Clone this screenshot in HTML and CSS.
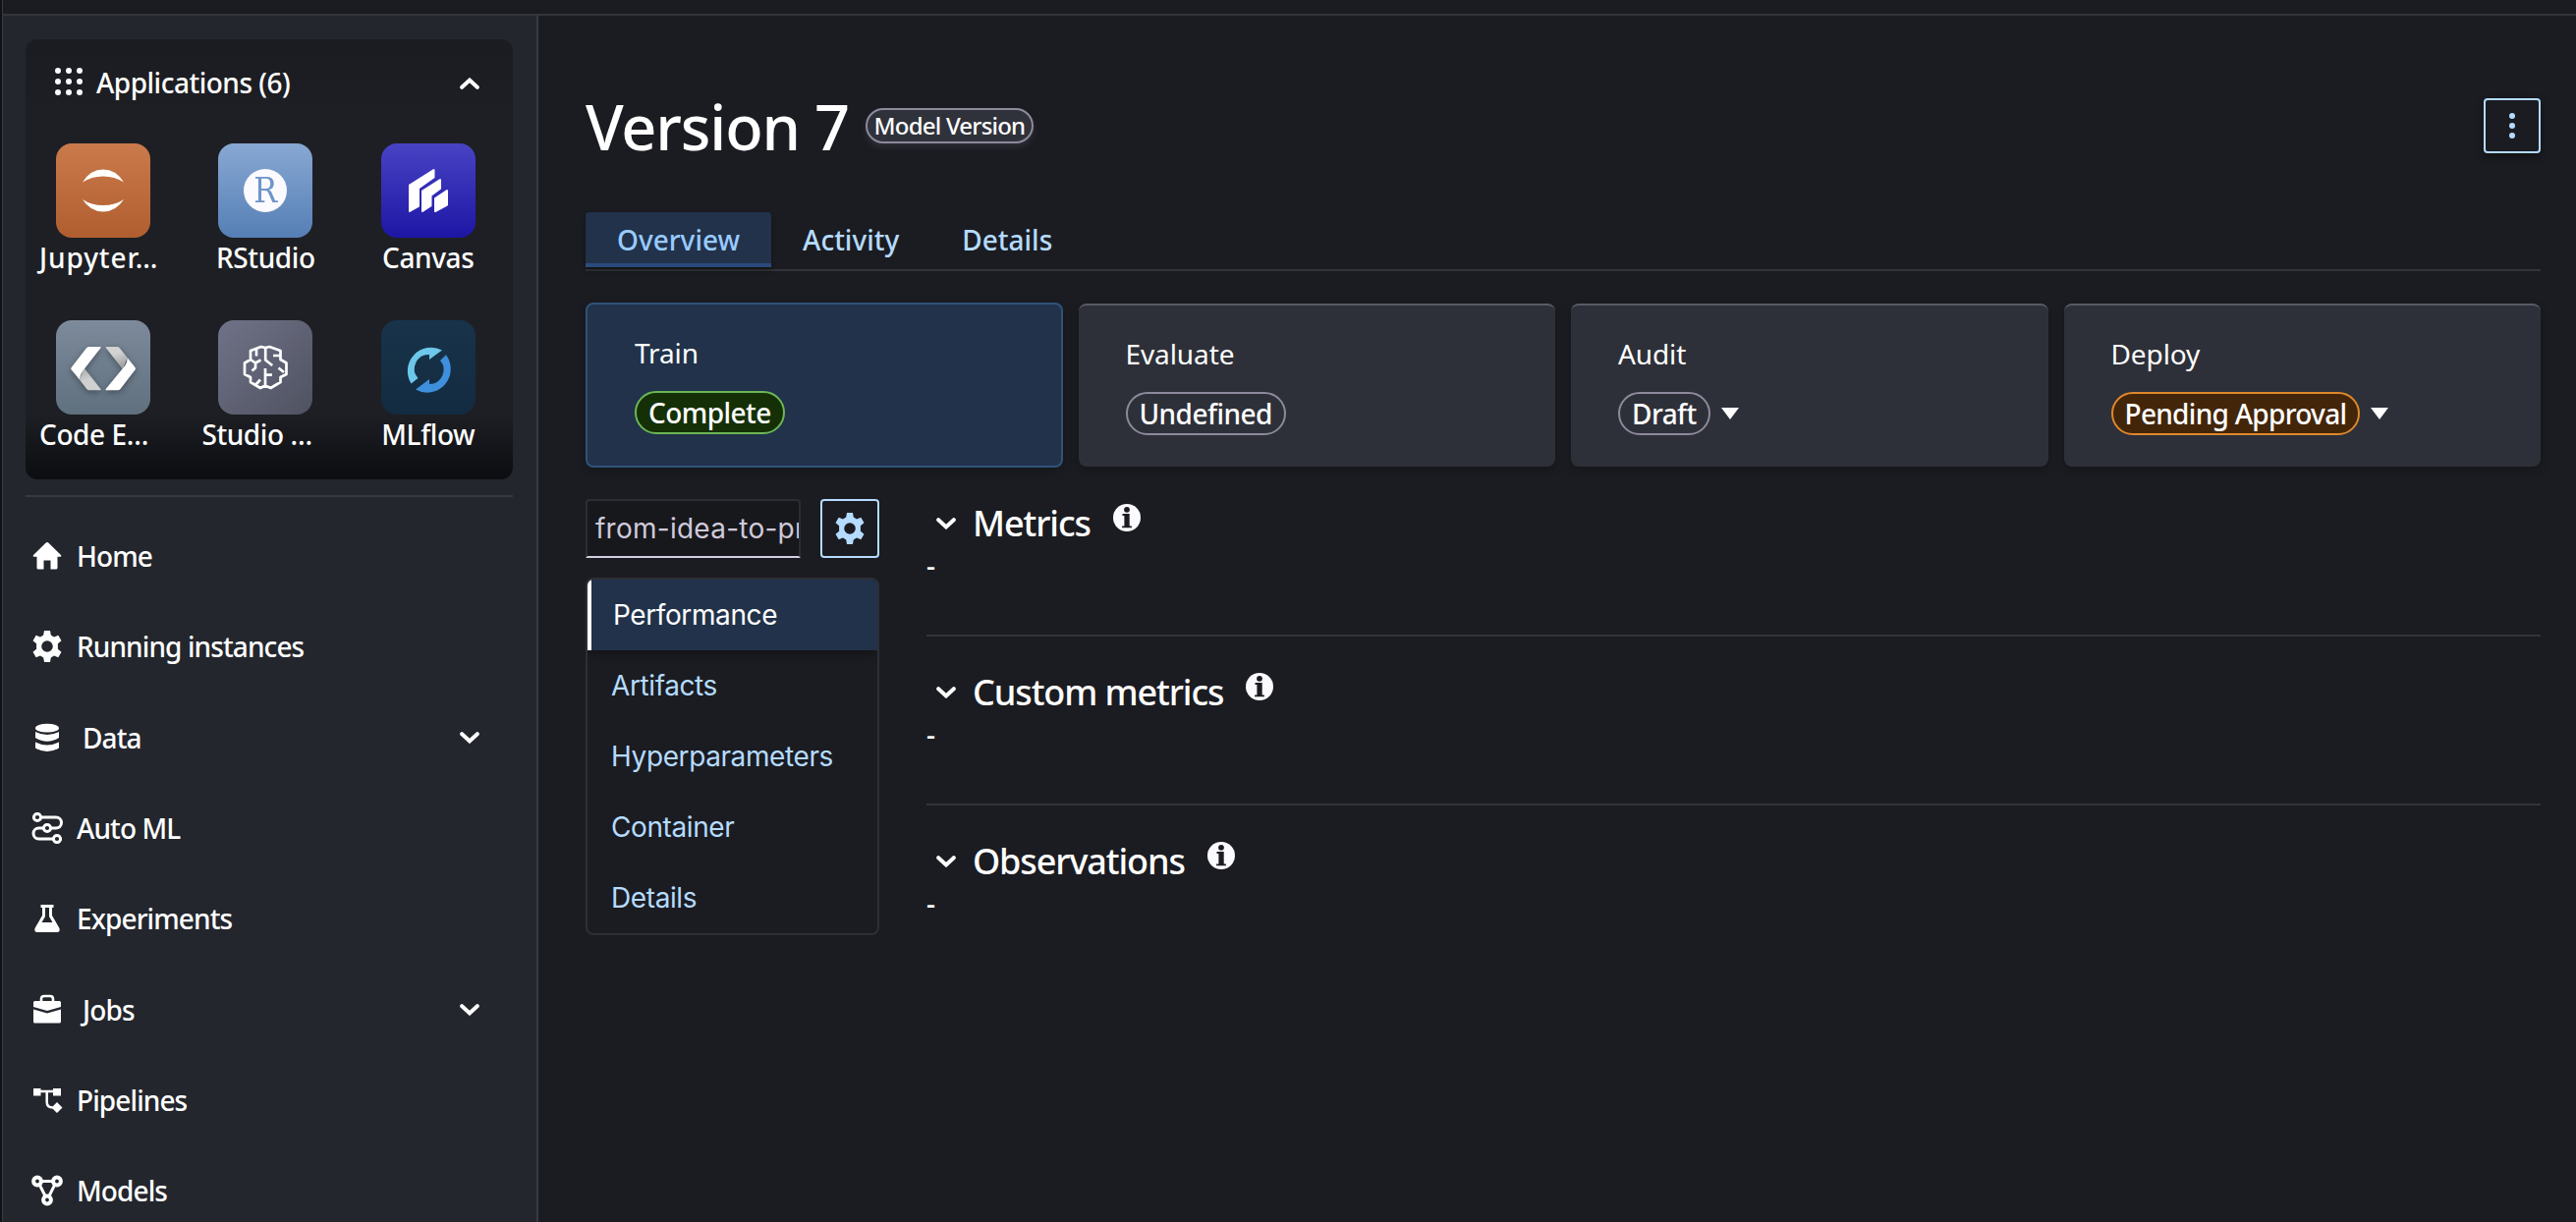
FILE: index.html
```html
<!DOCTYPE html>
<html lang="en">
<head>
<meta charset="utf-8">
<title>Version 7</title>
<link rel="stylesheet" href="styles.css">
</head>
<body>
<svg width="0" height="0" class="defs">
  <defs>
    <symbol id="chev" viewBox="0 0 20 12"><path d="M2.2 2.2 10 9.4l7.800-7.200" fill="none" stroke="currentColor" stroke-width="4" stroke-linecap="round" stroke-linejoin="miter"/></symbol>
    <symbol id="gear" viewBox="0 0 30 32"><path fill="currentColor" fill-rule="evenodd" d="M12 0h6l.8 4.600 3.200 1.800 4.300-1.600 3.200 5.400-3.600 3v5.600l3.600 3-3.200 5.400-4.300-1.600-3.200 1.800L18 32h-6l-.8-4.600L8 25.600l-4.300 1.600L.5 21.800l3.600-3v-5.600l-3.600-3 3.200-5.400L8 6.400l3.200-1.800zM15 10.200a5.800 5.800 0 1 0 0 11.600 5.800 5.800 0 0 0 0-11.600z"/></symbol>
    <symbol id="info" viewBox="0 0 28 28"><circle cx="14" cy="14" r="14" fill="#fbfaff"/><g fill="#1b1c21"><circle cx="14" cy="5.800" r="2.900"/><path d="M9.500 10h7.200v12.400h2.200v1.900H9.100v-1.900h2.300V11.900H9.500z"/></g></symbol>
  </defs>
</svg>
<div class="app">
  <div class="topbar"></div>
  <div class="body">
    <aside class="sidebar">
      <section class="apps">
        <header class="apps-head">
          <svg class="grid-icon" viewBox="0 0 28 28" fill="#fbfaff"><circle cx="3" cy="3" r="3"/><circle cx="14" cy="3" r="3"/><circle cx="25" cy="3" r="3"/><circle cx="3" cy="14" r="3"/><circle cx="14" cy="14" r="3"/><circle cx="25" cy="14" r="3"/><circle cx="3" cy="25" r="3"/><circle cx="14" cy="25" r="3"/><circle cx="25" cy="25" r="3"/></svg>
          <span class="apps-title">Applications (6)</span>
          <svg class="chev up"><use href="#chev"/></svg>
        </header>
        <div class="apps-grid">
          <div class="tile-cell"><div class="tile jupyter"><svg viewBox="0 0 96 96" fill="#fff"><path d="M27 39.500Q35 26.500 48 26.500T69 39.500Q60 33.500 48 33.500T27 39.500zM27 57q8 12.500 21 12.500T69 57q-9 6-21 6t-21-6z"/></svg></div><span class="left wide">Jupyter…</span></div>
          <div class="tile-cell"><div class="tile rstudio"><span class="r-mark"><b>R</b></span></div><span>RStudio</span></div>
          <div class="tile-cell"><div class="tile canvas"><svg viewBox="0 0 96 96" fill="#fff" stroke="#fff" stroke-width="2" stroke-linejoin="round"><path d="M29 42.500 53.500 27v7.500L38 45.500v18.500l-9 5zM42 48.500 60 37v9L50.500 53v10.500L42 69zM55 56l12-8v14.500L55 69z"/></svg></div><span>Canvas</span></div>
          <div class="tile-cell"><div class="tile code"><svg viewBox="0 0 96 96"><defs><linearGradient id="fold" x1="0" y1="0" x2="0.300" y2="1"><stop offset="0.400" stop-color="#d2d2d2"/><stop offset="1" stop-color="#a2a2a2"/></linearGradient><linearGradient id="fold2" x1="0.300" y1="1" x2="0" y2="0"><stop offset="0.400" stop-color="#d0d0d0"/><stop offset="1" stop-color="#a4a4a4"/></linearGradient></defs><path d="M50.700 28q-.5-1 .5-1H62q1.800 0 2.800 1.300L72.500 38 68 50z" fill="url(#fold)"/><path d="M24 60.500 28.500 48.500 45.500 70q.5 1.300-.5 1.300H34q-1.800 0-2.800-1.300z" fill="url(#fold2)"/><path d="M31 28.300Q32 27 34 27h11q1 0 .6 1L28.500 50Q25 54 24 60.500L15.700 50.500q-.9-1.200 0-2.400zM72.500 38l8 10q.9 1.300 0 2.500L65.500 70q-1 1.300-2.800 1.300H51.200q-1 0-.5-1.300L68 49Q73 44 72.500 38z" fill="#fff"/></svg></div><span class="left">Code E…</span></div>
          <div class="tile-cell"><div class="tile brain"><svg viewBox="0 0 96 96" fill="none" stroke="#fff" stroke-width="2.700" stroke-linejoin="round"><path d="M48 28l-4.300-1L33 31v9l-6 3.500V55l6 3v5l10 6 5-2.500V49M48 28l4.300-1L63.500 31v9l6 3.500V55l-6 3v5l-10 6-5.500-2.500M39 29v7.500M33 40l5 3.500 5.500-3M38 43.500v5l-3.500 3M48.200 28v12.500l7 5.500M63.500 36H56M61.500 48.500l5.500 4.500M48 55.700h7M43 60.500l-4.500 5"/></svg></div><span class="left">Studio …</span></div>
          <div class="tile-cell"><div class="tile mlflow"><svg viewBox="0 0 96 96"><path d="M30.500 64.500A24 24 0 0 1 62 30.500L49 40v-5.100A14.500 14.500 0 0 0 37.500 59z" fill="#6cc7ea"/><path d="M66 35.200A24 24 0 0 1 35 70.500L49 60v5A14.500 14.500 0 0 0 60 41z" fill="#3e8fdc"/></svg></div><span>MLflow</span></div>
        </div>
      </section>
      <hr class="side-line">
      <nav class="nav">
        <a class="nav-item"><svg class="ico" viewBox="0 0 32 32" fill="#fff"><path d="M16 2q.8 0 1.500.7L30 15q1.200 1.500-.5 1.700H26.500V28q0 1.500-1.500 1.500h-5.500v-9h-7v9H7Q5.500 29.500 5.500 28V16.700H2.500Q.8 16.500 2 15L14.500 2.700Q15.200 2 16 2z"/></svg><span>Home</span></a>
        <a class="nav-item"><svg class="ico"><use href="#gear"/></svg><span>Running instances</span></a>
        <a class="nav-item group"><svg class="ico" viewBox="0 0 32 32" fill="#fff"><ellipse cx="16" cy="6.200" rx="12" ry="4.400"/><path d="M4 10q12 6 24 0v6q-12 7.500-24 0zM4 20.500q12 6 24 0v6q-12 7-24 0z"/></svg><span>Data</span><svg class="chev"><use href="#chev"/></svg></a>
        <a class="nav-item"><svg class="ico" viewBox="0 0 32 32" fill="none" stroke="#fff" stroke-width="3"><circle cx="6" cy="5" r="3.600"/><circle cx="16" cy="16" r="3.600"/><circle cx="26" cy="27" r="3.600"/><path d="M9.600 5H25a5.500 5.500 0 0 1 0 11h-5.400M12.400 16H7.500a5.500 5.500 0 0 0 0 11h14.900"/></svg><span>Auto ML</span></a>
        <a class="nav-item"><svg class="ico" viewBox="0 0 32 32" fill="#fff"><path fill-rule="evenodd" d="M9.500 2h13v3H21v8l7.500 13q1 4-2.500 4H6q-3.500 0-2.500-4L11 13V5H9.500zM14 5v9l-3.500 6h11L18 14V5z"/></svg><span>Experiments</span></a>
        <a class="nav-item group"><svg class="ico" viewBox="0 0 32 32" fill="#fff"><path d="M10 8V5q0-3 3-3h6q3 0 3 3v3" fill="none" stroke="#fff" stroke-width="2.600"/><path d="M3.500 7h25q1.500 0 1.500 1.500V13l-14 4-14-4V8.500Q2 7 3.500 7zM2 15.500l14 4 14-4V28q0 1.500-1.500 1.500h-25Q2 29.500 2 28z"/></svg><span>Jobs</span><svg class="chev"><use href="#chev"/></svg></a>
        <a class="nav-item"><svg class="ico" viewBox="0 0 32 32" fill="#fff"><path d="M3 4h6.500v7.500H2V4zM22 4h8v7.500h-8zM26 18l5.500 5.500L26 29l-5.500-5.500z"/><path d="M9 7h13M15.700 7v11q0 5.500 6 5.500" fill="none" stroke="#fff" stroke-width="2.500"/></svg><span>Pipelines</span></a>
        <a class="nav-item"><svg class="ico" viewBox="0 0 32 32" fill="none" stroke="#fff"><g stroke-width="4"><circle cx="6" cy="6.500" r="3.900"/><circle cx="26" cy="6.500" r="3.900"/><circle cx="16" cy="25.500" r="3.900"/></g><path d="M9 6.500h14M8.500 10.500l5.500 11M23.500 10.500 18 21.500" stroke-width="3"/></svg><span>Models</span></a>
      </nav>
    </aside>
    <main class="main">
      <header class="page-head">
        <h1>Version 7</h1>
        <span class="type-badge">Model Version</span>
        <button class="more"><svg viewBox="0 0 6 26" fill="#b5dbff"><circle cx="3" cy="3" r="3"/><circle cx="3" cy="13" r="3"/><circle cx="3" cy="23" r="3"/></svg></button>
      </header>
      <nav class="tabs"><a class="tab active">Overview</a><a class="tab">Activity</a><a class="tab">Details</a></nav>
      <section class="stages">
        <article class="stage current"><h3>Train</h3><div class="status"><span class="pill ok">Complete</span></div></article>
        <article class="stage"><h3>Evaluate</h3><div class="status"><span class="pill">Undefined</span></div></article>
        <article class="stage"><h3>Audit</h3><div class="status"><span class="pill">Draft</span><i class="caret"></i></div></article>
        <article class="stage"><h3>Deploy</h3><div class="status"><span class="pill warn">Pending Approval</span><i class="caret"></i></div></article>
      </section>
      <div class="content">
        <div class="side-col">
          <div class="picker"><div class="field">from-idea-to-prod</div><button class="cfg"><svg><use href="#gear"/></svg></button></div>
          <ul class="menu"><li class="sel">Performance</li><li>Artifacts</li><li>Hyperparameters</li><li>Container</li><li>Details</li></ul>
        </div>
        <div class="panels">
          <section class="panel"><header><svg class="chev"><use href="#chev"/></svg><h2>Metrics</h2><svg class="info"><use href="#info"/></svg></header><p>-</p></section>
          <section class="panel"><header><svg class="chev"><use href="#chev"/></svg><h2>Custom metrics</h2><svg class="info"><use href="#info"/></svg></header><p>-</p></section>
          <section class="panel"><header><svg class="chev"><use href="#chev"/></svg><h2>Observations</h2><svg class="info"><use href="#info"/></svg></header><p>-</p></section>
        </div>
      </div>
    </main>
  </div>
</div>
</body>
</html>
```
FILE: styles.css
```css
* { box-sizing: border-box; }
body { margin: 0; background: #1b1c21; color: #fff; font: 500 28px/36px "Noto Sans", sans-serif; overflow: hidden; }
h1, h2, h3, p, ul { margin: 0; padding: 0; font-weight: inherit; }
button { padding: 0; background: none; font: inherit; }
.defs { position: absolute; }
.app { height: 1244px; display: flex; flex-direction: column; border-left: 2px solid #111214; }
.topbar { flex: none; height: 16px; border-bottom: 2px solid #33343b; border-left: 1px solid #3a3b42; }
.body { flex: 1; display: flex; min-height: 0; border-left: 1px solid #3a3b42; }
.sidebar { flex: none; width: 545px; padding: 24px 24px 0 23px; background: #23262d; border-right: 2px solid #383944; overflow: hidden; }
.apps { height: 448px; border-radius: 12px; background: linear-gradient(#1b1c21 0, #1e1f24 80px, #1e1f24 380px, #0c0d11 448px); overflow: hidden; }
.apps-head { display: flex; align-items: center; height: 86px; padding: 0 34px 0 30px; }
.apps-title { letter-spacing: -.5px; line-height: 38px; padding-top: 1px; }
.grid-icon { width: 28px; height: 28px; margin-right: 14px; }
.chev { width: 20px; height: 12px; margin-left: auto; flex: none; }
.up { transform: rotate(180deg); margin-top: 3px; }
.apps-grid { display: grid; grid-template-columns: repeat(3, 128px); column-gap: 37.400px; grid-auto-rows: 180px; padding: 20px 0 0 15px; letter-spacing: -.4px; }
.tile-cell { display: flex; flex-direction: column; align-items: center; line-height: 40px; }
.tile-cell .left { align-self: flex-start; margin-left: -1px; }
.tile-cell .wide { letter-spacing: .9px; }
.tile { width: 96px; height: 96px; border-radius: 16px; display: flex; align-items: center; justify-content: center; }
.tile svg { width: 96px; height: 96px; }
.jupyter { background: linear-gradient(#cb7a4c, #b05e2f); }
.rstudio { background: linear-gradient(#88a8d3, #557fb5); }
.canvas { background: linear-gradient(#4843c4, #1d16a5); }
.code { background: linear-gradient(#7d8a9b, #5f707e); }
.brain { background: linear-gradient(135deg, #707288, #4f5260); }
.mlflow { background: linear-gradient(#18334a, #132b40); }
.code svg { filter: drop-shadow(0 2px 3px rgba(0, 0, 0, .35)); }
.r-mark { width: 44px; height: 44px; border-radius: 50%; background: #fbfaff; color: #6f95c8; font: 36px/44px "DejaVu Serif", serif; text-align: center; }
.r-mark b { display: block; font-weight: 400; transform: scaleX(.88); }
.side-line { height: 2px; margin: 16px 0 14px; border: 0; background: #383944; }
.nav-item { display: flex; align-items: center; height: 92.300px; padding: 0 34px 0 6px; letter-spacing: -.9px; }
.ico { width: 32px; height: 32px; margin-right: 14px; flex: none; }
.group .ico { margin-right: 20px; }
.main { flex: 1; padding: 84px 36px 0 48px; }
.page-head { display: flex; height: 56px; }
h1 { font-size: 63px; line-height: 57px; letter-spacing: -1.150px; }
.type-badge { width: 171px; height: 36px; margin: 10px 0 0 17px; border: 2px solid #8d8a9c; border-radius: 18px; background: #30323b; font-size: 24px; line-height: 32px; letter-spacing: -.8px; text-align: center; box-shadow: 0 4px 6px rgba(120, 116, 140, .2); }
.more { width: 58px; height: 56px; margin-left: auto; border: 2px solid #b5dbff; border-radius: 4px; box-shadow: 0 4px 8px rgba(0, 0, 0, .4); }
.more svg { width: 6px; height: 26px; display: block; margin: auto; }
.tabs { display: flex; height: 60px; margin-top: 60px; border-bottom: 2px solid #33343b; color: #b5dbff; }
.tab { height: 56px; padding: 0 32px; line-height: 56px; }
.active { background: #21324a; border-bottom: 4px solid #2b4a7c; border-radius: 4px 4px 0 0; color: #99cbff; box-shadow: 0 4px 5px rgba(0, 0, 0, .3); }
.stages { display: grid; grid-template-columns: repeat(4, 1fr); gap: 16px; margin-top: 32px; }
.stage { height: 166px; margin: 1px 0; padding: 31px 48px 0; border-top: 2px solid #595967; border-radius: 8px; background: #2e3039; box-shadow: 0 4px 10px rgba(0, 0, 0, .2); }
.current { height: 168px; margin: 0; border: 2px solid #2f5379; background: #21324a; }
h3 { font-size: 28px; font-weight: 400; letter-spacing: -.1px; }
.status { display: flex; align-items: center; margin-top: 21px; letter-spacing: -.55px; }
.pill { height: 44px; padding: 0 12px; border: 2px solid #8d8a9c; border-radius: 22px; line-height: 40px; }
.ok { background: #153007; border-color: #6db754; }
.warn { background: #43260a; border-color: #e0882b; letter-spacing: -.7px; }
.caret { border: 9px solid transparent; border-top: 12px solid #fff; border-bottom: 0; margin-left: 11px; }
.content { display: flex; gap: 48px; margin-top: 32px; }
.side-col { width: 299px; font-family: Inter, sans-serif; font-weight: 400; letter-spacing: -.4px; }
.picker { display: flex; justify-content: space-between; }
.field { width: 219px; height: 60px; padding: 0 8px; line-height: 57px; letter-spacing: .25px; background: #17181c; border: 2px solid #2c2d34; border-bottom-color: #d5cfe0; border-radius: 4px 4px 0 0; overflow: hidden; color: #d0cadb; white-space: nowrap; }
.cfg { width: 60px; height: 60px; border: 2px solid #b5dbff; border-radius: 4px; color: #b5dbff; }
.cfg svg { width: 30px; height: 32px; display: block; margin: auto; }
.menu { height: 364px; margin-top: 20px; border: 2px solid #2e2f36; border-radius: 8px; list-style: none; color: #b5dbff; overflow: hidden; }
.menu li { height: 72px; padding-left: 24px; line-height: 73px; }
.menu .sel { padding-left: 22px; border-left: 4px solid #fff; background: #21324a; color: #fff; box-shadow: 0 2px 10px rgba(0, 0, 0, .4); }
.panels { flex: 1; }
.panel { height: 140px; margin-bottom: 32px; border-bottom: 2px solid #33343b; }
.panel:last-child { border: 0; }
.panel header { display: flex; height: 49px; align-items: center; padding-left: 10px; }
.panel .chev { margin: 0 17px 0 0; }
h2 { font-size: 36px; letter-spacing: -1.100px; }
.info { width: 28px; height: 28px; margin: -12px 0 0 23px; }
.panel p { line-height: 36px; }
```
